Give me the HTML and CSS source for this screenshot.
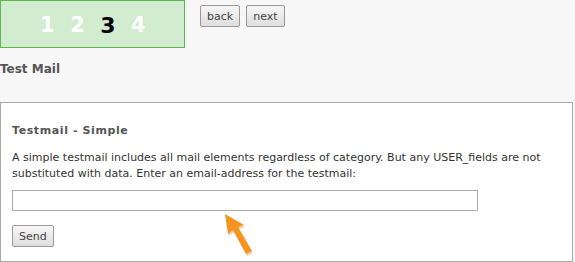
FILE: index.html
```html
<!DOCTYPE html>
<html lang="en">
<head>
    <meta charset="UTF-8">
    <title>Test Mail</title>
    <link rel="stylesheet" href="styles.css">
</head>
<body>
    <div class="top">
        <div class="steps">
            <span>1</span>
            <span>2</span>
            <span class="current">3</span>
            <span>4</span>
        </div>
        <div class="nav-btns">
            <button class="btn">back</button>
            <button class="btn">next</button>
        </div>
    </div>

    <h4 class="page-title">Test Mail</h4>

    <div class="panel">
        <h3>Testmail - Simple</h3>
        <p>A simple testmail includes all mail elements regardless of category. But any USER_fields are not substituted with data. Enter an email-address for the testmail:</p>
        <input type="text" class="mail-input">
        <div><button class="btn">Send</button></div>

        <svg class="arrow" width="40" height="50" viewBox="0 0 40 50">
            <polygon points="3,2 22,13 16,15 30,39 24,42 11,18 6,22" fill="#c77a1c" opacity="0.35" transform="translate(1,2)"/>
            <polygon points="3,2 22,13 16,15 30,39 24,42 11,18 6,22" fill="#f7941d"/>
        </svg>
    </div>
</body>
</html>
```

FILE: styles.css
```css
body {
  margin: 0;
  background: #f7f7f7;
  font-family: "DejaVu Sans", Verdana, sans-serif;
  font-size: 11px;
  color: #333;
}

.top {
  display: flex;
  align-items: flex-start;
}

.steps {
  width: 144px;
  height: 44px;
  border: 1px solid #5cb84c;
  background: #d1ecce;
  display: flex;
  align-items: center;
  gap: 15.5px;
  padding: 2px 0 0 39px;
  box-sizing: content-box;
  font-weight: bold;
  font-size: 21px;
  color: #fff;
}

.steps .current {
  color: #000;
  font-size: 22px;
}

.nav-btns {
  margin: 5px 0 0 15px;
  display: flex;
  gap: 6px;
}

.btn {
  font-family: "DejaVu Sans", Verdana, sans-serif;
  font-size: 11px;
  color: #444;
  height: 22px;
  padding: 0 6px;
  border: 1px solid #999;
  border-radius: 2px;
  background: linear-gradient(#f6f6f6, #dedede);
}

.page-title {
  margin: 0;
  padding: 14px 0 0 0;
  height: 40px;
  font-size: 12px;
  color: #555;
}

.panel {
  position: relative;
  width: 560px;
  margin-right: 2px;
  border: 1px solid #aaa;
  background: #fff;
  padding: 21px 0 10px 11px;
  height: 127px;
}

.panel h3 {
  margin: 0 0 13px;
  font-size: 11px;
  letter-spacing: 0.6px;
  color: #555;
}

.panel p {
  margin: 0 0 8px;
  line-height: 16px;
  padding-right: 10px;
}

.mail-input {
  display: block;
  width: 466px;
  height: 21px;
  box-sizing: border-box;
  border: 1px solid #aaa;
  margin: 0 0 14px;
}

.arrow {
  position: absolute;
  left: 221px;
  top: 109px;
}
```
